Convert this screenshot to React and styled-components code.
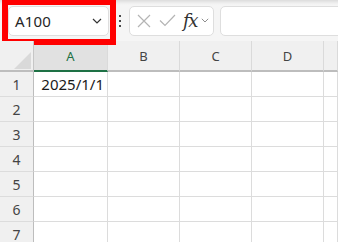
import React from "react";
import styled, { createGlobalStyle } from "styled-components";

// global page reset
const GlobalStyle = createGlobalStyle`
  html, body {
    margin: 0;
    padding: 0;
    background: #ffffff;
    overflow: hidden;
  }
  body {
    font-family: "Noto Sans", "Open Sans", "Noto Sans CJK JP", sans-serif;
  }
`;

const Sheet = styled.div`
  width: 338px;
  height: 242px;
  overflow: hidden;
  background: #ffffff;
`;

// formula bar
const Toolbar = styled.div`
  display: flex;
  align-items: center;
  height: 41px;
  padding-left: 8px;
  box-sizing: border-box;
  background: linear-gradient(#dcdcdc 0px, #eeeeee 3px, #f5f5f5 5px);
`;

const NameBoxWrap = styled.div`
  position: relative;
  margin-top: 1px;
`;

const Box = styled.div`
  display: flex;
  align-items: center;
  height: 30px;
  box-sizing: border-box;
  width: ${(p) => p.w || "auto"};
  flex: ${(p) => (p.grow ? 1 : "none")};
  background: #ffffff;
  border: 1px solid #dedede;
  border-radius: 5px;
  margin-right: ${(p) => (p.grow ? "-10px" : "0")};
`;

const NameText = styled.span`
  flex: 1;
  padding-left: 6px;
  font-size: 15px;
  color: #262626;
  letter-spacing: 0.2px;
`;

const RedFrame = styled.div`
  position: absolute;
  left: -6px;
  right: -7px;
  top: -7px;
  bottom: -9px;
  border: 6px solid #ff0000;
  pointer-events: none;
`;

const Dots = styled.div`
  display: flex;
  flex-direction: column;
  gap: 3px;
  margin: 0 8px 0 10px;
  span {
    width: 2px;
    height: 2px;
    background: #4a4a4a;
  }
`;

const FxText = styled.span`
  font-family: "DejaVu Serif", "Liberation Serif", serif;
  font-style: italic;
  font-size: 18px;
  color: #333333;
  margin-left: 7px;
  letter-spacing: -1.5px;
  line-height: 1;
`;

const Gap = styled.div`
  width: 6px;
`;

// grid
const Grid = styled.div`
  display: grid;
  grid-template-columns: 34px 74px 72px 72px 72px 1fr;
  grid-auto-rows: 25px;
  grid-template-rows: 31px;
`;

const Corner = styled.div`
  position: relative;
  background: #f0f0f0;
  border-right: 1px solid #c6c6c6;
  border-bottom: 2px solid #bdbdbd;
  svg {
    position: absolute;
    right: 2px;
    bottom: 1px;
  }
`;

const ColHead = styled.div`
  display: flex;
  align-items: center;
  justify-content: center;
  font-size: 13px;
  color: ${(p) => (p.active ? "#1e7145" : "#444444")};
  background: ${(p) => (p.active ? "#e1e1e1" : "#f0f0f0")};
  border-right: 1px solid #dadada;
  border-bottom: 2px solid ${(p) => (p.active ? "#1e7145" : "#bdbdbd")};
`;

const RowHead = styled.div`
  display: flex;
  align-items: center;
  justify-content: center;
  font-size: 14px;
  color: #444444;
  background: #f0f0f0;
  border-right: 1px solid #bdbdbd;
  border-bottom: 1px solid #dcdcdc;
`;

const Cell = styled.div`
  display: flex;
  align-items: center;
  justify-content: flex-end;
  padding-right: 3px;
  font-size: 15px;
  color: #1a1a1a;
  border-right: 1px solid #dcdcdc;
  border-bottom: 1px solid #dcdcdc;
  overflow: hidden;
  white-space: nowrap;
`;

const columns = ["A", "B", "C", "D", ""];
const rows = [1, 2, 3, 4, 5, 6, 7];

const Chevron = ({ size = 10, color = "#333" }) => (
  <svg width={size} height={size * 0.6} viewBox="0 0 10 6">
    <path d="M1 1 L5 5 L9 1" fill="none" stroke={color} strokeWidth="1.2" />
  </svg>
);

const App = () => {
  return (
    <Sheet>
      <GlobalStyle />
      <Toolbar>
        <NameBoxWrap>
          <Box w="101px">
            <NameText>A100</NameText>
            <div style={{ marginRight: 6, display: "flex" }}>
              <Chevron />
            </div>
          </Box>
          <RedFrame />
        </NameBoxWrap>
        <Dots>
          <span />
          <span />
          <span />
        </Dots>
        <Box w="85px">
          <svg width="14" height="14" viewBox="0 0 14 14" style={{ marginLeft: 7 }}>
            <path d="M1 1 L13 13 M13 1 L1 13" stroke="#b4b4b4" strokeWidth="1.2" />
          </svg>
          <svg width="17" height="13" viewBox="0 0 17 13" style={{ marginLeft: 8 }}>
            <path d="M1 6.5 L6 11.5 L16 1" fill="none" stroke="#b4b4b4" strokeWidth="1.2" />
          </svg>
          <FxText>fx</FxText>
          <div style={{ marginLeft: 4, display: "flex" }}>
            <Chevron size={8} color="#888" />
          </div>
        </Box>
        <Gap />
        <Box grow />
      </Toolbar>
      <Grid>
        <Corner>
          <svg width="17" height="17" viewBox="0 0 17 17">
            <path d="M17 0 L17 17 L0 17 Z" fill="#d9d9d9" />
          </svg>
        </Corner>
        {columns.map((c, i) => (
          <ColHead key={i} active={c === "A"}>
            {c}
          </ColHead>
        ))}
        {rows.map((r) => (
          <React.Fragment key={r}>
            <RowHead>{r}</RowHead>
            {columns.map((c, i) => (
              <Cell key={i}>{r === 1 && c === "A" ? "2025/1/1" : ""}</Cell>
            ))}
          </React.Fragment>
        ))}
      </Grid>
    </Sheet>
  );
};

export default App;
